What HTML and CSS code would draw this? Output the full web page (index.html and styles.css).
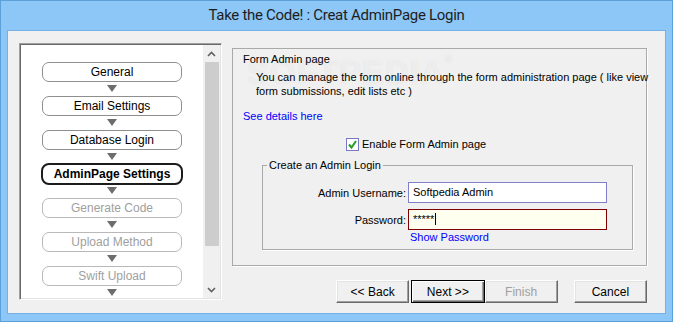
FILE: index.html
```html
<!DOCTYPE html>
<html lang="en">
<head>
    <meta charset="UTF-8">
    <title>Take the Code! : Creat AdminPage Login</title>
    <link rel="stylesheet" href="styles.css">
</head>
<body>

<div class="window">
    <div class="titlebar">Take the Code! : Creat AdminPage Login</div>

    <div class="client">
        <!-- Steps list -->
        <div class="steps-panel">
            <div class="steps">
                <div class="step">General</div>
                <div class="arrow"></div>
                <div class="step">Email Settings</div>
                <div class="arrow"></div>
                <div class="step">Database Login</div>
                <div class="arrow"></div>
                <div class="step active">AdminPage Settings</div>
                <div class="arrow"></div>
                <div class="step disabled">Generate Code</div>
                <div class="arrow"></div>
                <div class="step disabled">Upload Method</div>
                <div class="arrow"></div>
                <div class="step disabled">Swift Upload</div>
                <div class="arrow"></div>
            </div>
            <div class="scrollbar">
                <div class="sb-btn">
                    <svg width="9" height="6" viewBox="0 0 9 6"><path d="M1 5 L4.5 1.5 L8 5" fill="none" stroke="#606060" stroke-width="1.6"/></svg>
                </div>
                <div class="sb-track"><div class="sb-thumb"></div></div>
                <div class="sb-btn">
                    <svg width="9" height="6" viewBox="0 0 9 6"><path d="M1 1 L4.5 4.5 L8 1" fill="none" stroke="#606060" stroke-width="1.6"/></svg>
                </div>
            </div>
        </div>

        <!-- Page content -->
        <div class="main">
            <div class="group">
                <div class="watermark">SOFTPEDIA<span class="reg">®</span></div>
                <div class="group-title">Form Admin page</div>
                <div class="group-desc">You can manage the form online through the form administration page ( like view<br>form submissions, edit lists etc )</div>
                <a class="link group-link" href="#">See details here</a>
                <label class="check-row">
                    <span class="checkbox">
                        <svg width="11" height="11" viewBox="0 0 11 11"><path d="M2 5.5 L4.5 8.5 L9 2" fill="none" stroke="#21a121" stroke-width="2"/></svg>
                    </span>
                    Enable Form Admin page
                </label>

                <fieldset class="login">
                    <legend>Create an Admin Login</legend>
                    <div class="form-grid">
                        <span class="field-label">Admin Username:</span>
                        <div class="input user">Softpedia Admin</div>
                        <span class="field-label">Password:</span>
                        <div class="input pass"><span class="caret">*****</span></div>
                        <span></span>
                        <a class="link show-pass" href="#">Show Password</a>
                    </div>
                </fieldset>
            </div>

            <div class="buttons">
                <button class="btn">&lt;&lt; Back</button>
                <button class="btn default">Next &gt;&gt;</button>
                <button class="btn" disabled>Finish</button>
                <button class="btn cancel">Cancel</button>
            </div>
        </div>
    </div>
</div>

</body>
</html>
```

FILE: styles.css
```css
body {
    margin: 0;
    font-family: 'Liberation Sans', Arial, sans-serif;
    font-size: 11px;
    color: #000;
}
.window {
    width: 673px;
    height: 322px;
    box-sizing: border-box;
    background: #8cc7f7;
    border: 1px solid #5c9fd9;
    padding: 0 6px 7px 6px;
    display: flex;
    flex-direction: column;
}
.titlebar {
    height: 29px;
    line-height: 28px;
    text-align: center;
    font-family: Roboto, 'Liberation Sans', sans-serif;
    font-size: 15px;
    letter-spacing: -0.3px;
    color: #1e1e1e;
}
.client {
    flex: 1;
    display: flex;
    align-items: flex-start;
    background: #f0f0f0;
    border: 1px solid #74b0e4;
    padding: 12px 0 0 11px;
}

/* steps list */
.steps-panel {
    width: 203px;
    height: 257px;
    box-sizing: border-box;
    display: flex;
    padding: 1px;
    border: 1px solid;
    border-color: #a0a0a0 #fff #fff #a0a0a0;
    box-shadow: inset 1px 1px 0 #696969, inset -1px -1px 0 #e3e3e3;
}
.steps {
    flex: 1;
    background: #fff;
    display: flex;
    flex-direction: column;
    align-items: center;
    padding-top: 17px;
    overflow: hidden;
}
.step {
    width: 140px;
    height: 20px;
    box-sizing: border-box;
    border: 1px solid #8e8e8e;
    border-radius: 7px;
    text-align: center;
    line-height: 18px;
    font-size: 12px;
    flex-shrink: 0;
}
.step.active {
    width: 142px;
    height: 22px;
    margin: -1px 0;
    border: 2px solid #1c1c1c;
    border-radius: 8px;
    font-weight: bold;
}
.step.disabled {
    color: #a0a0a0;
    border-color: #b9b9b9;
}
.arrow {
    width: 0;
    height: 0;
    flex-shrink: 0;
    border-left: 5px solid transparent;
    border-right: 5px solid transparent;
    border-top: 7px solid #6d6d6d;
    margin: 3px 0 4px;
}
.scrollbar {
    width: 17px;
    display: flex;
    flex-direction: column;
    background: #f0f0f0;
}
.sb-btn {
    height: 17px;
    display: flex;
    align-items: center;
    justify-content: center;
}
.sb-track {
    flex: 1;
    padding: 0 1px 0 2px;
}
.sb-thumb {
    height: 184px;
    background: #cdcdcd;
}

/* right side */
.main {
    margin: 5px 0 0 10px;
    width: 415px;
}
.group {
    position: relative;
    height: 218px;
    box-sizing: border-box;
    border: 1px solid #a9a9a9;
    box-shadow: 1px 1px 0 #fff;
}
.watermark {
    position: absolute;
    left: 14px;
    top: 5px;
    font-size: 33px;
    font-weight: bold;
    letter-spacing: 1px;
    color: rgba(255, 255, 255, 0.6);
    text-shadow: 0 0 1px rgba(0, 0, 0, 0.12);
}
.watermark .reg {
    font-size: 10px;
    vertical-align: top;
}
.group-title {
    position: relative;
    margin: 3px 0 0 10px;
    line-height: 14px;
}
.group-desc {
    position: relative;
    margin: 4px 0 0 23px;
    line-height: 14px;
    white-space: nowrap;
}
.link {
    color: #0000ff;
    text-decoration: none;
    line-height: 14px;
}
.group-link {
    display: block;
    width: max-content;
    margin: 11px 0 0 10px;
}
.check-row {
    display: flex;
    align-items: center;
    gap: 3px;
    height: 14px;
    margin: 14px 0 0 113px;
}
.checkbox {
    width: 13px;
    height: 13px;
    box-sizing: border-box;
    border: 1px solid #7878c4;
    background: #fff;
    display: flex;
    align-items: center;
    justify-content: center;
}
.login {
    margin: 7px 13px 0 29px;
    padding: 10px 0 5px 0;
    border: 1px solid #a9a9a9;
    box-shadow: 1px 1px 0 #fff;
}
.login legend {
    margin-left: 4px;
    padding: 0 2px;
    line-height: 14px;
}
.form-grid {
    display: grid;
    grid-template-columns: 145px 199px;
    row-gap: 6px;
    align-items: center;
}
.form-grid .show-pass {
    margin: -6px 0 0 2px;
}
.field-label {
    text-align: right;
    padding-right: 2px;
}
.input {
    height: 21px;
    box-sizing: border-box;
    border: 1px solid #7f7fca;
    background: #fff;
    padding: 0 4px;
    line-height: 19px;
    font-size: 11px;
}
.input.pass {
    border-color: #800000;
    background: #fffff0;
}
.caret {
    border-right: 1px solid #000;
    padding-right: 1px;
}
.buttons {
    display: flex;
    margin-top: 14px;
    padding-left: 104px;
}
.btn {
    width: 75px;
    height: 23px;
    box-sizing: border-box;
    margin: 0;
    padding: 0;
    font-family: 'Liberation Sans', Arial, sans-serif;
    font-size: 12px;
    color: #000;
    background: #f0f0f0;
    border: 1px solid;
    border-color: #fff #696969 #696969 #fff;
    box-shadow: inset -1px -1px 0 #a0a0a0, inset 1px 1px 0 #e3e3e3;
}
.btn.default {
    margin-left: 2px;
    border: 1px solid #000;
    box-shadow: inset 1px 1px 0 #fff, inset -1px -1px 0 #696969, inset -2px -2px 0 #a0a0a0;
}
.btn:disabled {
    color: #a0a0a0;
}
.btn.cancel {
    margin-left: 16px;
}
```
